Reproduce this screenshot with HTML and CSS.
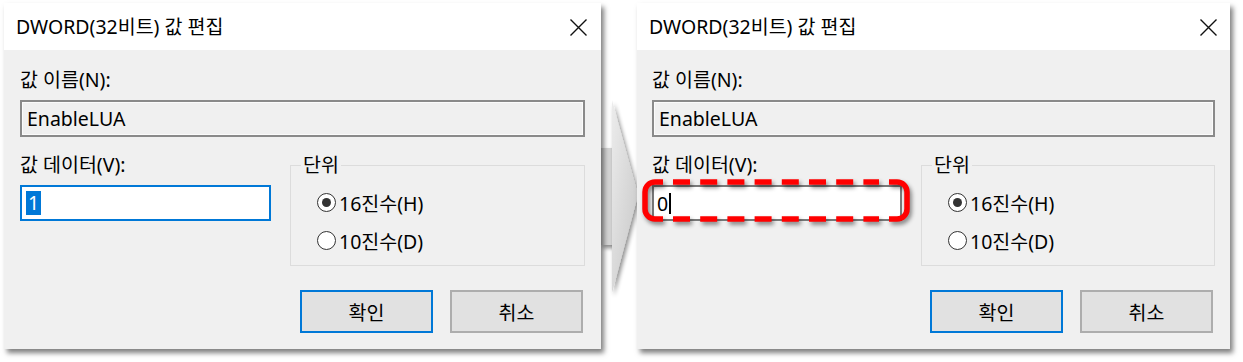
FILE: index.html
```html
<!DOCTYPE html>
<html lang="ko">
<head>
<meta charset="utf-8">
<title>DWORD(32비트) 값 편집</title>
<link rel="stylesheet" href="styles.css">
</head>
<body>
<div class="page">
  <div class="dialog dialog-a">
    <div class="titlebar">
      <span class="title">DWORD(32비트) 값 편집</span>
      <svg class="close" width="17" height="17" viewBox="0 0 17 17"><path d="M0.5 0.5L16.5 16.5M16.5 0.5L0.5 16.5" stroke="#111" stroke-width="1.4" fill="none"/></svg>
    </div>
    <div class="body">
      <div class="label">값 이름(N):</div>
      <div class="field field-disabled">EnableLUA</div>
      <div class="row">
        <div class="col-data">
          <div class="label">값 데이터(V):</div>
          <div class="field field-focus"><span class="sel">1</span></div>
        </div>
        <fieldset class="group">
          <legend>단위</legend>
          <div class="radio"><span class="dot checked"></span><span>16진수(H)</span></div>
          <div class="radio"><span class="dot"></span><span>10진수(D)</span></div>
        </fieldset>
      </div>
      <div class="buttons">
        <div class="btn btn-default">확인</div>
        <div class="btn">취소</div>
      </div>
    </div>
  </div>

  <div class="connector">
    <svg width="40" height="300" viewBox="0 0 40 300">
      <defs>
        <linearGradient id="tri" x1="0" y1="0" x2="1" y2="1">
          <stop offset="0" stop-color="#ececec"/>
          <stop offset="1" stop-color="#c6c6c6"/>
        </linearGradient>
        <filter id="sh" x="-50%" y="-20%" width="200%" height="140%">
          <feGaussianBlur in="SourceAlpha" stdDeviation="2"/>
          <feOffset dx="2" dy="3"/>
          <feComponentTransfer><feFuncA type="linear" slope="0.45"/></feComponentTransfer>
          <feMerge><feMergeNode/><feMergeNode in="SourceGraphic"/></feMerge>
        </filter>
      </defs>
      <rect x="0" y="145" width="14" height="97" fill="#d5d5d5" filter="url(#sh)"/>
      <polygon points="11,97 37,192 11,290" fill="url(#tri)" filter="url(#sh)"/>
    </svg>
  </div>

  <div class="dialog dialog-b">
    <div class="titlebar">
      <span class="title">DWORD(32비트) 값 편집</span>
      <svg class="close" width="17" height="17" viewBox="0 0 17 17"><path d="M0.5 0.5L16.5 16.5M16.5 0.5L0.5 16.5" stroke="#111" stroke-width="1.4" fill="none"/></svg>
    </div>
    <div class="body">
      <div class="label">값 이름(N):</div>
      <div class="field field-disabled">EnableLUA</div>
      <div class="row">
        <div class="col-data">
          <div class="label">값 데이터(V):</div>
          <div class="field field-plain">0<span class="caret"></span>
            <svg class="mark" width="268" height="43" viewBox="0 0 268 43">
              <g fill="none" stroke="#ff0000" stroke-width="5.5">
                <path d="M21 3 H13 A10 10 0 0 0 3 13 V30 A10 10 0 0 0 13 40 H21"/>
                <path d="M247 3 H255 A10 10 0 0 1 265 13 V30 A10 10 0 0 1 255 40 H247"/>
                <path d="M31 3 H237" stroke-dasharray="17 10.2"/>
                <path d="M31 40 H237" stroke-dasharray="17 10.2"/>
              </g>
            </svg>
          </div>
        </div>
        <fieldset class="group">
          <legend>단위</legend>
          <div class="radio"><span class="dot checked"></span><span>16진수(H)</span></div>
          <div class="radio"><span class="dot"></span><span>10진수(D)</span></div>
        </fieldset>
      </div>
      <div class="buttons">
        <div class="btn btn-default">확인</div>
        <div class="btn">취소</div>
      </div>
    </div>
  </div>
</div>
</body>
</html>
```

FILE: styles.css
```css
* { box-sizing: border-box; }
html, body { margin: 0; padding: 0; background: #ffffff; }
body {
  font-family: "Noto Sans", "Noto Sans CJK KR", sans-serif;
  font-size: 19.5px;
  color: #000;
  width: 1243px;
  height: 362px;
  overflow: hidden;
}
.page {
  display: flex;
  align-items: flex-start;
  padding: 3px 0 0 4px;
}
.dialog {
  position: relative;
  z-index: 1;
  height: 346px;
  background: #f0f0f0;
  box-shadow: 3px 4px 5px rgba(0,0,0,0.5);
  display: flex;
  flex-direction: column;
}
.dialog-a { width: 597px; }
.dialog-b { width: 593px; }
.titlebar {
  height: 47px;
  background: #fff;
  display: flex;
  align-items: center;
  justify-content: space-between;
  padding: 0 14px 0 12px;
}
.dialog-b .titlebar { padding-right: 13px; }
.title { line-height: 24px; }
.close { display: block; margin-top: 2px; }
.body {
  padding: 18px 16px 0 16px;
  display: flex;
  flex-direction: column;
}
.dialog-b .body { padding-left: 15px; padding-right: 15px; }
.label { line-height: 24px; height: 24px; }
.field {
  position: relative;
  margin-top: 8px;
  height: 37px;
  line-height: 33px;
  padding: 0 5px;
}
.field-disabled {
  background: #f0f0f0;
  border: 2px solid #8a8a8a;
  box-shadow: inset 0 0 0 1px #fbfbfb;
}
.field-focus {
  height: 36px;
  background: #fff;
  border: 2px solid #0078d7;
  padding: 0 4px;
  display: flex;
  align-items: center;
}
.sel {
  background: #0078d7;
  color: #fff;
  line-height: 24px;
  padding: 0 2px;
}
.field-plain {
  height: 36px;
  background: #fff;
  border: 2px solid #7a7a7a;
  padding: 0 3px;
  display: flex;
  align-items: center;
}
.caret {
  display: inline-block;
  width: 1.5px;
  height: 21px;
  background: #000;
  margin-left: 1px;
}
.mark {
  position: absolute;
  left: -12px;
  top: -8px;
  overflow: visible;
  filter: drop-shadow(2px 3px 2px rgba(0,0,0,0.45));
}
.row {
  display: flex;
  margin-top: 16px;
  gap: 19px;
}
.col-data { width: 251px; flex: none; }
.dialog-b .col-data { width: 250px; }
.group {
  flex: 1;
  margin: 0;
  border: 1px solid #dcdcdc;
  padding: 13px 12px 13px 10px;
  min-width: 0;
  height: 113px;
}
.group legend {
  padding: 0 2px;
  line-height: 24px;
}
.radio {
  display: flex;
  align-items: center;
  height: 24px;
  margin-left: 16px;
  gap: 3px;
}
.radio + .radio { margin-top: 14px; }
.dot {
  width: 19px;
  height: 19px;
  border-radius: 50%;
  border: 1.5px solid #333;
  background: #fff;
  display: flex;
  align-items: center;
  justify-content: center;
  flex: none;
}
.dot.checked::after {
  content: "";
  width: 9px;
  height: 9px;
  border-radius: 50%;
  background: #333;
}
.buttons {
  display: flex;
  justify-content: flex-end;
  gap: 17px;
  margin-top: 24px;
  padding-right: 2px;
}
.btn {
  width: 133px;
  height: 43px;
  background: #e1e1e1;
  border: 2px solid #adadad;
  display: flex;
  align-items: center;
  justify-content: center;
}
.btn-default { border-color: #0078d7; }
.connector {
  width: 36px;
  flex: none;
  position: relative;
  z-index: 0;
  height: 300px;
}
.connector svg { display: block; overflow: visible; }
```
